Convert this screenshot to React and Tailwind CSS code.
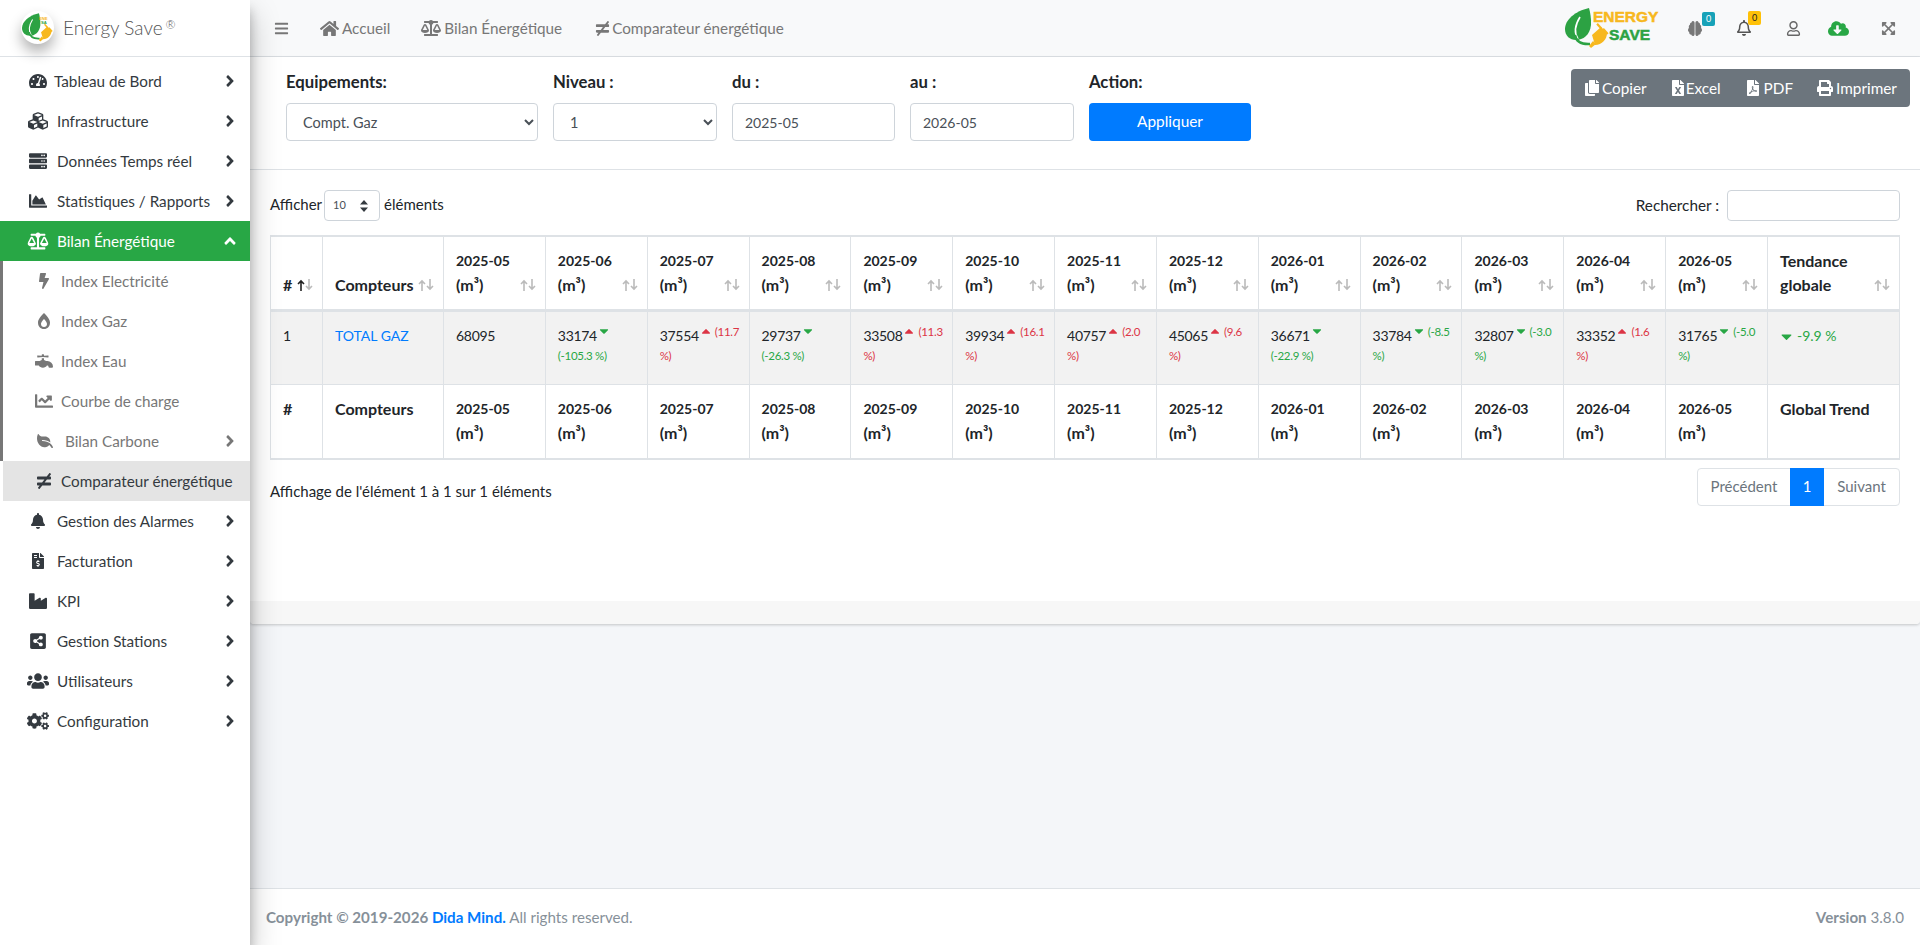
import React from "react";
import {
  FaTachometerAlt, FaCubes, FaServer, FaChartArea, FaBalanceScale, FaBolt, FaBurn, FaFaucet, FaChartLine, FaLeaf,
  FaNotEqual, FaBell, FaFileInvoiceDollar, FaIndustry, FaShareAltSquare, FaUsers, FaCogs, FaAngleRight, FaAngleUp,
  FaBars, FaHome, FaBrain, FaRegBell, FaRegUser, FaCloudDownloadAlt, FaExpandArrowsAlt, FaCopy, FaFileExcel, FaFilePdf,
  FaPrint, FaCaretDown, FaCaretUp,
} from "react-icons/fa";

function Leaf() {
  return (
    <g>
      <path d="M24 0 C10 3 0 12 0 21 C0 28 5 32 11 32 C18 32 25 27 26 17 C26.5 10 25 4 24 0 Z" fill="#2ca243" />
      <path d="M15 9 C10 17 9 25 13 31" fill="none" stroke="#fff" strokeWidth="1.6" />
      <path d="M10 27 C11 33 16 36.5 25 36" fill="none" stroke="#2ca243" strokeWidth="2.4" />
    </g>
  );
}
function Plug() {
  return (
    <g fill="#f7b81e">
      <path d="M27 27 L36 19 L42 25 C42 31 37 37 30 37 Z" />
      <path d="M24 38 L28 33 L31 36 L26 40 Z" />
      <rect x="33" y="15" width="2.2" height="7" transform="rotate(-42 34 18)" />
      <rect x="39" y="20" width="2.2" height="7" transform="rotate(-42 40 23)" />
    </g>
  );
}

function Logo() {
  return (
    <svg width="96" height="40" viewBox="0 0 96 40" className="block">
      <Leaf />
      <Plug />
      <text x="28" y="14" fontFamily="'Liberation Sans',sans-serif" fontWeight="700" fontSize="15.5" fill="#f7b81e" stroke="#f7b81e" strokeWidth=".5">ENERGY</text>
      <text x="44" y="32" fontFamily="'Liberation Sans',sans-serif" fontWeight="700" fontSize="15.5" fill="#2ca243" stroke="#2ca243" strokeWidth=".5">SAVE</text>
    </svg>
  );
}

function RoundLogo() {
  return (
    <div className="w-[33px] h-[33px] rounded-full bg-white shadow-[0_8px_14px_rgba(0,0,0,0.3)] overflow-hidden flex items-center justify-center">
      <svg width="31" height="30" viewBox="0 0 44 42">
        <Leaf />
        <text x="24" y="9" fontFamily="'Liberation Sans',sans-serif" fontWeight="700" fontSize="6" fill="#f7b81e">ENE</text>
        <text x="27" y="16" fontFamily="'Liberation Sans',sans-serif" fontWeight="700" fontSize="6" fill="#2ca243">SA</text>
        <Plug />
      </svg>
    </div>
  );
}

const top = [
  [FaTachometerAlt, "Tableau de Bord", "-ml-[3px]", 18],
  [FaCubes, "Infrastructure", "", 20],
  [FaServer, "Données Temps réel", "", 18],
  [FaChartArea, "Statistiques / Rapports", "", 18],
];
const bottom = [
  [FaBell, "Gestion des Alarmes", 16],
  [FaFileInvoiceDollar, "Facturation", 16],
  [FaIndustry, "KPI", 18],
  [FaShareAltSquare, "Gestion Stations", 18],
  [FaUsers, "Utilisateurs", 22],
  [FaCogs, "Configuration", 22],
];
const sub = [
  [FaBolt, "Index Electricité", 16],
  [FaBurn, "Index Gaz", 16],
  [FaFaucet, "Index Eau", 18],
  [FaChartLine, "Courbe de charge", 18],
];

function Row({ Icon, label, size, shift = "" }) {
  return (
    <div className="h-10 flex items-center relative text-[#343a40] text-[15.25px] pr-[11px]">
      <span className="w-[57px] shrink-0 relative">
        <span className="absolute left-[38px] top-0 -translate-x-1/2 -translate-y-1/2"><Icon size={size} /></span>
      </span>
      <span className={shift}>{label}</span>
      <FaAngleRight size={18} className="ml-auto" />
    </div>
  );
}

function Sidebar() {
  return (
    <aside className="w-[250px] shrink-0 bg-white relative z-10 shadow-[0_14px_28px_rgba(0,0,0,0.25),0_10px_10px_rgba(0,0,0,0.22)]">
      <div className="h-[57px] border-b border-[#dee2e6] flex items-center pl-[21px] pb-[1px]">
        <RoundLogo />
        <span className="ml-[9px] mt-[1px] text-[19px] font-light text-[#555]">Energy Save<sup className="text-[12px] ml-[3px]">®</sup></span>
      </div>
      <nav className="pt-[4px]">
        {top.map(([I, l, g, s]) => <Row key={l} Icon={I} label={l} shift={g} size={s} />)}
        <div className="h-10 flex items-center relative bg-[#28a745] text-white text-[15.25px] pr-[11px]">
          <span className="w-[57px] shrink-0 relative">
            <span className="absolute left-[38px] top-0 -translate-x-1/2 -translate-y-1/2"><FaBalanceScale size={21} /></span>
          </span>
          <span>Bilan Énergétique</span>
          <FaAngleUp size={18} className="ml-auto" />
        </div>
        <div className="border-l-[3px] border-[#777] text-[#777] text-[15.25px]">
          {sub.map(([I, l, s]) => (
            <div key={l} className="h-10 flex items-center">
              <span className="w-[58px] shrink-0 relative">
                <span className="absolute left-[41px] top-0 -translate-x-1/2 -translate-y-1/2"><I size={s} /></span>
              </span>
              <span>{l}</span>
            </div>
          ))}
          <div className="h-10 flex items-center pr-[11px]">
            <span className="w-[62px] shrink-0 relative">
              <span className="absolute left-[42px] top-0 -translate-x-1/2 -translate-y-1/2"><FaLeaf size={16} className="-scale-x-100" /></span>
            </span>
            <span>Bilan Carbone</span>
            <FaAngleRight size={18} className="ml-auto" />
          </div>
        </div>
        <div className="h-10 flex items-center bg-[#e4e4e4] text-[#343a40] text-[15.25px] ml-[3px]">
          <span className="w-[58px] shrink-0 relative">
            <span className="absolute left-[41px] top-0 -translate-x-1/2 -translate-y-1/2"><FaNotEqual size={16} /></span>
          </span>
          <span>Comparateur énergétique</span>
        </div>
        {bottom.map(([I, l, s]) => <Row key={l} Icon={I} label={l} size={s} />)}
      </nav>
    </aside>
  );
}

function Header() {
  return (
    <header className="h-[57px] shrink-0 bg-[#f8f9fa] border-b border-[#dee2e6] flex items-center pl-[24px] text-[15.25px] text-[#777]">
      <FaBars size={15} />
      <FaHome size={19} className="ml-[31px]" />
      <span className="ml-[3px]">Accueil</span>
      <FaBalanceScale size={20} className="ml-[31px]" />
      <span className="ml-[3px]">Bilan Énergétique</span>
      <FaNotEqual size={15} className="ml-[33px]" />
      <span className="ml-[2px]">Comparateur énergétique</span>
      <div className="ml-auto flex items-center pr-[24px]">
        <Logo />
        <span className="relative ml-[27px] w-[22px]">
          <FaBrain preserveAspectRatio="none" className="w-[14px] h-[15px] text-[#777]" />
          <span className="absolute -top-[9px] left-[14px] bg-[#17a2b8] text-white text-[9px] leading-[14px] w-[13px] h-[14px] text-center rounded-[2px]">0</span>
        </span>
        <span className="relative ml-[26px] w-[22px] text-[#555]">
          <FaRegBell size={16} />
          <span className="absolute -top-[9px] left-[12px] bg-[#ffc107] text-[#222] text-[9px] leading-[14px] w-[13px] h-[14px] text-center rounded-[2px]">0</span>
        </span>
        <FaRegUser size={15} className="ml-[28px] text-[#666]" />
        <FaCloudDownloadAlt size={21} className="ml-[27px] text-[#28a745]" />
        <FaExpandArrowsAlt size={15} className="ml-[32px] text-[#777]" />
      </div>
    </header>
  );
}

function Field({ label, w, children }) {
  return (
    <div className={`${w} shrink-0`}>
      <div className="h-6 leading-6 font-bold text-[16.7px] text-[#212529] mb-[9px]">{label}</div>
      {children}
    </div>
  );
}

const ctrl = "w-full h-[38px] bg-white border border-[#ced4da] rounded text-[#495057] text-[14.5px]";

function Filters() {
  return (
    <section className="h-[113px] shrink-0 border-b border-[#dee2e6] pt-[13px] pl-[36px] pr-[10px] flex gap-[15px] bg-white">
      <Field label="Equipements:" w="w-[252px]">
        <select className={`${ctrl} px-3`} defaultValue="g"><option value="g">Compt. Gaz</option></select>
      </Field>
      <Field label="Niveau :" w="w-[164px]">
        <select className={`${ctrl} px-3`} defaultValue="1"><option value="1">1</option></select>
      </Field>
      <Field label="du :" w="w-[163px]">
        <input className={`${ctrl} px-3 text-[14px]`} defaultValue="2025-05" />
      </Field>
      <Field label="au :" w="w-[164px]">
        <input className={`${ctrl} px-3 text-[14px]`} defaultValue="2026-05" />
      </Field>
      <Field label="Action:" w="w-[162px]">
        <button className="w-full h-[38px] bg-[#007bff] text-white rounded text-[15.4px]">Appliquer</button>
      </Field>
      <div className="ml-auto -mt-[1px] h-[38px] w-[339px] bg-[#6c757d] rounded text-white text-[15.3px] flex items-center pl-[13px]">
        <FaCopy size={16} />
        <span className="ml-[2px]">Copier</span>
        <FaFileExcel size={16} className="ml-[23px]" />
        <span>Excel</span>
        <FaFilePdf size={16} className="ml-[24px]" />
        <span className="ml-[3px]">PDF</span>
        <FaPrint size={16} className="ml-[24px]" />
        <span className="ml-[3px]">Imprimer</span>
      </div>
    </section>
  );
}

function Sort({ active }) {
  return (
    <svg width="16" height="12" viewBox="0 0 16 12" className="absolute right-[9px] bottom-[18px]">
      <path d="M4 12V2M1 5l3-3 3 3" fill="none" stroke={active ? "#222" : "#bbb"} strokeWidth="1.6" />
      <path d="M12 0v10M9 7l3 3 3-3" fill="none" stroke="#bbb" strokeWidth="1.6" />
    </svg>
  );
}

const months = ["2025-05", "2025-06", "2025-07", "2025-08", "2025-09", "2025-10", "2025-11", "2025-12", "2026-01", "2026-02", "2026-03", "2026-04", "2026-05"];
const vals = [
  ["68095"],
  ["33174", "d", "", "(-105.3 %)"],
  ["37554", "u", "(11.7", "%)"],
  ["29737", "d", "", "(-26.3 %)"],
  ["33508", "u", "(11.3", "%)"],
  ["39934", "u", "(16.1", "%)"],
  ["40757", "u", "(2.0", "%)"],
  ["45065", "u", "(9.6", "%)"],
  ["36671", "d", "", "(-22.9 %)"],
  ["33784", "d", "(-8.5", "%)"],
  ["32807", "d", "(-3.0", "%)"],
  ["33352", "u", "(1.6", "%)"],
  ["31765", "d", "(-5.0", "%)"],
];

const small = "text-[11.5px] tracking-[-0.3px]";

function ValCell({ v }) {
  const [n, dir, a, b] = v;
  const color = dir === "u" ? "text-[#dc3545]" : "text-[#28a745]";
  return (
    <td className="border border-[#dee2e6] px-3 pt-3 align-top">
      <div className="whitespace-nowrap h-[24px] leading-6 flex items-start tracking-[-0.3px]">
        <span>{n}</span>
        {dir && (
          <span className={`${color} flex items-start tracking-normal`}>
            {dir === "u" ? <FaCaretUp size={14} /> : <FaCaretDown size={14} />}
            {a && <span className={`${small} ml-[2px] leading-[16px]`}>{a}</span>}
          </span>
        )}
      </div>
      {b && <div className={`${color} ${small} leading-[14px] mt-[1px] whitespace-nowrap`}>{b}</div>}
    </td>
  );
}

const th = "border border-[#dee2e6] px-3 py-3 font-bold text-left leading-6 text-[#212529] text-[16px]";

function Month({ m }) {
  return (
    <>
      <span className="block h-6 text-[14px]">{m}</span>
      <span className="block h-6">(m³)</span>
    </>
  );
}

function DataTable() {
  return (
    <table className="w-[1630px] table-fixed border-collapse text-[14px] text-[#212529] border-y-2 border-[#dee2e6]">
      <colgroup>
        <col className="w-[52px]" />
        <col className="w-[121px]" />
        {months.map((m) => <col key={m} className="w-[101.85px]" />)}
        <col className="w-[132px]" />
      </colgroup>
      <thead>
        <tr className="h-[73px]">
          <th className={`${th} align-bottom relative border-b-[3px]`}>#<Sort active /></th>
          <th className={`${th} align-bottom relative border-b-[3px]`}>Compteurs<Sort /></th>
          {months.map((m) => (
            <th key={m} className={`${th} align-bottom relative border-b-[3px]`}><Month m={m} /><Sort /></th>
          ))}
          <th className={`${th} align-bottom relative border-b-[3px]`}>Tendance<br />globale<Sort /></th>
        </tr>
      </thead>
      <tbody>
        <tr className="h-[74px] bg-[#f2f2f2]">
          <td className="border border-[#dee2e6] px-3 pt-3 align-top leading-6">1</td>
          <td className="border border-[#dee2e6] px-3 pt-3 align-top leading-6 text-[#007bff]">TOTAL GAZ</td>
          {vals.map((v) => <ValCell key={v[0]} v={v} />)}
          <td className="border border-[#dee2e6] px-3 pt-3 align-top leading-6 text-[#28a745]">
            <span className="flex items-center gap-[2px] -ml-[2px]"><FaCaretDown size={17} />-9.9 %</span>
          </td>
        </tr>
      </tbody>
      <tfoot>
        <tr className="h-[74px]">
          <th className={`${th} align-top`}>#</th>
          <th className={`${th} align-top`}>Compteurs</th>
          {months.map((m) => <th key={m} className={`${th} align-top`}><Month m={m} /></th>)}
          <th className={`${th} align-top`}>Global Trend</th>
        </tr>
      </tfoot>
    </table>
  );
}

function TableSection() {
  return (
    <section className="pt-[20px] pl-[20px] pr-[20px] pb-[95px] bg-white text-[15px] text-[#212529]">
      <div className="flex items-center h-[31px] mb-[14px]">
        <span className="-mt-[3px]">Afficher</span>
        <span className="relative ml-[2px] mr-[4px]">
          <select className="appearance-none block w-[56px] h-[31px] border border-[#ced4da] rounded bg-white text-[11px] text-[#495057] pl-[8px]" defaultValue="10">
            <option value="10">10</option>
          </select>
          <svg width="8" height="12" viewBox="0 0 8 12" className="absolute right-[12px] top-[10px]">
            <path d="M4 0l4 4.5H0zM4 12L0 7.5h8z" fill="#343a40" />
          </svg>
        </span>
        <span className="-mt-[3px]">éléments</span>
        <span className="ml-auto mr-[8px] -mt-[1px] text-[15.3px]">Rechercher :</span>
        <input className="w-[173px] h-[31px] border border-[#ced4da] rounded bg-white" />
      </div>
      <DataTable />
      <div className="flex items-center justify-between mt-[8px] h-[38px]">
        <span className="pt-[10px]">Affichage de l'élément 1 à 1 sur 1 éléments</span>
        <div className="flex h-[38px] border border-[#dee2e6] rounded text-[#6c757d]">
          <span className="w-[92px] flex items-center justify-center">Précédent</span>
          <span className="w-[34px] flex items-center justify-center bg-[#007bff] text-white -my-[1px]">1</span>
          <span className="w-[75px] flex items-center justify-center">Suivant</span>
        </div>
      </div>
    </section>
  );
}

export default function App() {
  return (
    <div className="flex h-[945px] overflow-hidden bg-[#f4f6f9] font-['Lato',sans-serif]">
      <Sidebar />
      <main className="flex-1 min-w-0 flex flex-col">
        <Header />
        <div className="shrink-0 shadow-[0_1px_3px_rgba(0,0,0,0.2)] rounded-b">
          <Filters />
          <TableSection />
          <div className="h-[23px] bg-[#f7f7f7] rounded-b" />
        </div>
        <footer className="mt-auto h-[57px] shrink-0 bg-white border-t border-[#dee2e6] flex items-center justify-between pl-[16px] pr-[16px] text-[15.15px] text-[#869099]">
          <span><b>Copyright © 2019-2026 <span className="text-[#007bff]">Dida Mind.</span></b> All rights reserved.</span>
          <span><b>Version</b> 3.8.0</span>
        </footer>
      </main>
    </div>
  );
}
